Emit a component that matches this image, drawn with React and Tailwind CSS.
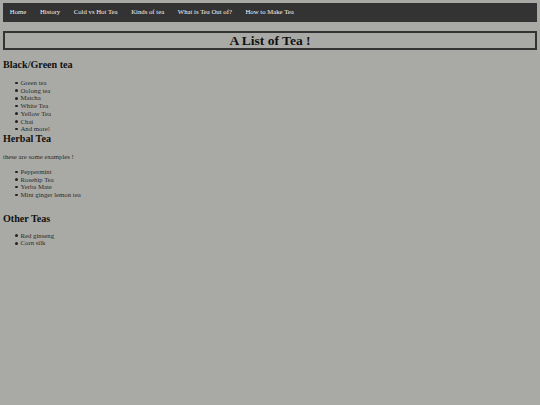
const navLinks = ["Home", "History", "Cold vs Hot Tea", "Kinds of tea", "What is Tea Out of?", "How to Make Tea"];

const blackGreen = ["Green tea", "Oolong tea", "Matcha", "White Tea", "Yellow Tea", "Chai", "And more!"];
const herbal = ["Peppermint", "Rosehip Tea", "Yerba Mate", "Mint ginger lemon tea"];
const other = ["Red ginseng", "Corn silk"];

const TeaList = ({ items, className = "" }) => (
  <ul className={`text-[6.75px] leading-[7.7px] text-[#2a2a2a] ${className}`}>
    {items.map((item) => (
      <li key={item} className="flex items-center">
        <span className="ml-[12px] mr-[3px] h-[2.5px] w-[2.5px] shrink-0 rounded-full bg-[#222]" />
        {item}
      </li>
    ))}
  </ul>
);

const App = () => {
  return (
    <div
      className="min-h-screen w-full bg-[#a9aaa5] p-[3px] text-[#111]"
      style={{ fontFamily: '"Liberation Serif", "Times New Roman", serif' }}
    >
      <nav className="flex h-[19px] items-center bg-[#333333] pr-[4px]">
        {navLinks.map((link) => (
          <a key={link} className="px-[6.8px] text-[6.75px] font-normal text-[#f2f2f2]">
            {link}
          </a>
        ))}
      </nav>

      <div className="mt-[9px] flex h-[19px] items-center justify-center border-2 border-[#333333]">
        <h1 className="text-[13.5px] font-bold leading-none">A List of Tea !</h1>
      </div>

      <h2 className="mt-[9px] text-[10.1px] font-bold leading-[12px]">Black/Green tea</h2>
      <TeaList items={blackGreen} className="mt-[8px]" />

      <h2 className="text-[10.1px] font-bold leading-[12px]">Herbal Tea</h2>
      <p className="mt-[8px] text-[6.75px] leading-[8px] text-[#2a2a2a]">these are some examples !</p>
      <TeaList items={herbal} className="mt-[7px]" />

      <h2 className="mt-[14px] text-[10.1px] font-bold leading-[12px]">Other Teas</h2>
      <TeaList items={other} className="mt-[7px]" />
    </div>
  );
};

export default App;
